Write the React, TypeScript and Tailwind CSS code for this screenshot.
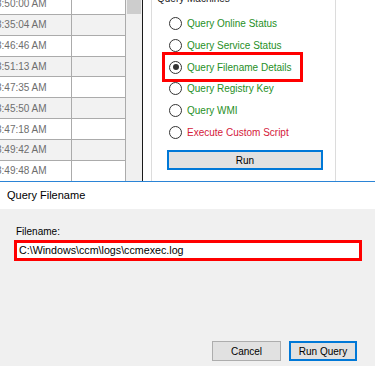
import React from "react";

const times = [
  "8:50:00 AM",
  "8:35:04 AM",
  "8:46:46 AM",
  "8:51:13 AM",
  "8:47:35 AM",
  "8:45:50 AM",
  "8:47:18 AM",
  "8:49:42 AM",
  "8:49:48 AM",
];

const options: { label: string; color: string; checked?: boolean }[] = [
  { label: "Query Online Status", color: "text-[#1f8f1f]" },
  { label: "Query Service Status", color: "text-[#1f8f1f]" },
  { label: "Query Filename Details", color: "text-[#1f8f1f]", checked: true },
  { label: "Query Registry Key", color: "text-[#1f8f1f]" },
  { label: "Query WMI", color: "text-[#1f8f1f]" },
  { label: "Execute Custom Script", color: "text-[#d4203a]" },
];

export default function App() {
  return (
    <div
      className="w-[375px] h-[366px] overflow-hidden flex flex-col bg-white"
      style={{ fontFamily: '"Liberation Sans", Arial, sans-serif' }}
    >
      {/* Top: grid + query machines group */}
      <div className="flex h-[181px] shrink-0 overflow-hidden bg-white">
        <div className="flex w-[142px] shrink-0 overflow-hidden">
          <div className="w-[126px] shrink-0 mt-[-6px]">
            {times.map((t, i) => (
              <div
                key={i}
                className={`flex h-[20.86px] border-b border-[#ababab] ${
                  i % 2 === 1 ? "bg-[#f2f2f2]" : "bg-white"
                }`}
              >
                <div className="w-[72px] border-r border-[#ababab] overflow-hidden flex items-center">
                  <span className="ml-[-4px] whitespace-nowrap text-[10px] text-[#6e6e6e]">
                    {t}
                  </span>
                </div>
                <div className="w-[54px] border-r border-[#ababab]" />
              </div>
            ))}
          </div>
          <div className="w-[16px] shrink-0 bg-[#f0f0f0] pl-px">
            <div className="w-[14px] h-[14px] bg-[#cdcdcd]" />
          </div>
        </div>
        <div className="w-px shrink-0 bg-[#1a1a1a]" />
        <div className="w-[8px] shrink-0" />
        <div className="relative w-[185px] shrink-0 border-x border-[#dcdcdc] pt-[13px]">
          <span className="absolute top-[-9px] left-[5px] text-[10px] text-[#222] whitespace-nowrap">
            Query Machines
          </span>
          {options.map((o) => (
            <div key={o.label} className="flex h-[21.7px] items-center pl-[17px]">
              <span className="flex items-center justify-center w-[13px] h-[13px] rounded-full border border-[#333] bg-white">
                {o.checked && <span className="w-[6px] h-[6px] rounded-full bg-[#333]" />}
              </span>
              <span className={`ml-[5px] text-[10px] whitespace-nowrap ${o.color}`}>{o.label}</span>
            </div>
          ))}
          <div className="absolute left-[10px] top-[52px] w-[141px] h-[30px] border-[3px] border-[#ff0000]" />
          <div className="ml-[15px] mt-[7px] w-[156px] h-[20px] border-2 border-[#0078d7] bg-[#e1e1e1] flex items-center justify-center text-[10px] text-black">
            Run
          </div>
        </div>
        <div className="flex-1" />
      </div>

      {/* Bottom dialog */}
      <div className="flex-1 flex flex-col border-t border-[#2b84d6]">
        <div className="h-[27px] shrink-0 bg-white flex items-center pl-[7px] text-[11px] text-black">
          Query Filename
        </div>
        <div className="flex-1 bg-[#f0f0f0] flex flex-col pl-[14px] pr-[13px] pt-[16px] pb-[5px]">
          <div className="pl-[2px] text-[10px] leading-[13px] text-black">Filename:</div>
          <div className="mt-[2px] h-[21px] border-[3px] border-[#ff0000] bg-white flex items-center pl-[2px] text-[10.7px] text-black whitespace-nowrap">
            C:\Windows\ccm\logs\ccmexec.log
          </div>
          <div className="flex-1" />
          <div className="flex justify-end gap-[8px] pr-[5px]">
            <div className="w-[69px] h-[20px] border border-[#adadad] bg-[#e1e1e1] flex items-center justify-center text-[10px] text-black">
              Cancel
            </div>
            <div className="w-[68px] h-[20px] border-2 border-[#0078d7] bg-[#e1e1e1] flex items-center justify-center text-[10px] text-black">
              Run Query
            </div>
          </div>
        </div>
      </div>
    </div>
  );
}
